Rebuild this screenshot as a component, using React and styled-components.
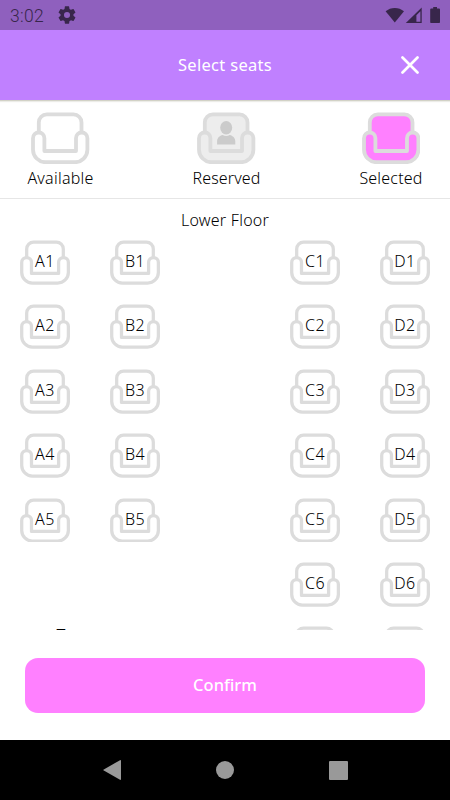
import React from "react";
import styled, { createGlobalStyle } from "styled-components";

const GlobalStyle = createGlobalStyle`
  * {
    box-sizing: border-box;
  }
  body {
    margin: 0;
    background: #fff;
    font-family: "Noto Sans", "Open Sans", sans-serif;
  }
`;

const Screen = styled.div`
  width: 450px;
  height: 800px;
  display: flex;
  flex-direction: column;
  overflow: hidden;
  background: #fff;
  color: #000;
`;

const StatusBar = styled.div`
  height: 30px;
  flex: none;
  display: flex;
  align-items: center;
  padding: 0 9px 0 10px;
  background: #8f60be;
  color: #38264b;
`;

const Clock = styled.span`
  font-family: Roboto, sans-serif;
  font-size: 17.5px;
  font-weight: 300;
  letter-spacing: 0.3px;
  line-height: 30px;
  padding-top: 1px;
  width: 48px;
`;

const StatusIcons = styled.div`
  display: flex;
  align-items: center;
  margin-left: auto;
`;

const Header = styled.header`
  height: 71px;
  flex: none;
  display: grid;
  grid-template-columns: 80px 1fr 80px;
  align-items: center;
  justify-items: center;
  background: #c080ff;
  border-bottom: 1px solid #d2d2c6;
  box-shadow: 0 1px 1px #ecece8;
`;

const Title = styled.h1`
  grid-column: 2;
  margin: 0;
  padding-bottom: 1px;
  font-size: 16.5px;
  font-weight: 400;
  letter-spacing: 0.3px;
  color: #fff;
`;

const CloseButton = styled.button`
  border: 0;
  padding: 0;
  background: none;
  display: flex;
`;

const Legend = styled.div`
  height: 98px;
  flex: none;
  display: flex;
  justify-content: space-between;
  padding: 11px 27px 0;
  border-bottom: 1px solid #e6e6e6;
`;

const LegendItem = styled.div`
  width: ${(p) => p.$width}px;
  display: flex;
  flex-direction: column;
  align-items: center;
`;

const Label = styled.span`
  font-size: 16px;
  font-weight: 300;
  line-height: 22px;
  margin-top: 3px;
  white-space: nowrap;
  letter-spacing: ${(p) => p.$spacing || 0}px;
`;

const SeatArea = styled.main`
  height: 431px;
  flex: none;
  overflow: hidden;
`;

const Floor = styled.h2`
  margin: 0;
  height: 41px;
  padding-top: 9px;
  text-align: center;
  font-size: 16px;
  line-height: 24px;
  font-weight: 300;
  letter-spacing: 0.25px;
`;

const SeatGrid = styled.div`
  display: grid;
  grid-template-columns: repeat(5, 90px);
  grid-auto-rows: 64.4px;
  justify-items: center;
`;

const SeatCell = styled.div`
  grid-column: ${(p) => p.$col};
  grid-row: ${(p) => p.$row};
  display: grid;
  justify-items: center;
  align-items: start;

  > * {
    grid-area: 1 / 1;
  }
`;

const SeatName = styled.span`
  font-size: 16px;
  font-weight: 300;
  line-height: 22px;
  padding-top: 10px;
  letter-spacing: 0.5px;
`;

const DoorMark = styled.span`
  grid-column: 1;
  grid-row: 7;
  font-size: 16px;
  line-height: 22px;
  padding-left: 32px;
  margin-top: -2px;
`;

const Footer = styled.footer`
  flex: 1;
  padding: 27.5px 25px 0;
`;

const ConfirmButton = styled.button`
  display: block;
  width: 400px;
  height: 55px;
  padding-bottom: 2px;
  border: 0;
  border-radius: 13px;
  background: #ff80ff;
  color: #fff;
  font-family: inherit;
  font-size: 16.5px;
  font-weight: 500;
`;

const NavBar = styled.nav`
  height: 60px;
  flex: none;
  display: grid;
  grid-template-columns: repeat(3, 113px);
  justify-content: center;
  justify-items: center;
  align-items: center;
  background: #000;
`;

const Seat = ({ width, fill = "none", person }) => (
  <svg width={width} height={(width * 52.2) / 58.3} viewBox="0 0 58.3 52.2">
    <g fill={fill} stroke="#dcdcdc" strokeWidth="3.8" strokeLinejoin="round">
      <path
        stroke="none"
        d="M7.8 21V10.4a8 8 0 0 1 8-8h26.7a8 8 0 0 1 8 8v10.6l-5 18h-32z"
      />
      <path
        fill="none"
        d="M7.8 20V10.4a8 8 0 0 1 8-8h26.7a8 8 0 0 1 8 8v9.6"
      />
      <path d="M2 26.2a5.7 5.7 0 0 1 11.4 0v12.8H45V26.2a5.7 5.7 0 0 1 11.4 0v11.6a12.5 12.5 0 0 1-12.5 12.4H14.4A12.5 12.5 0 0 1 2 37.8z" />
    </g>
    {person && (
      <g fill="#cbcbcb">
        <ellipse cx="29.2" cy="15.8" rx="6" ry="6.7" />
        <path d="M20.1 32.5v-3.2c0-3.4 2.6-5.4 5.6-6.2 2.2 1.2 4.8 1.2 7 0 3 .8 5.6 2.8 5.6 6.2v3.2z" />
      </g>
    )}
  </svg>
);

const COLUMNS = [
  { letter: "A", col: 1, count: 5 },
  { letter: "B", col: 2, count: 5 },
  { letter: "C", col: 4, count: 7 },
  { letter: "D", col: 5, count: 7 },
];

const App = () => {
  return (
    <Screen>
      <GlobalStyle />
      <StatusBar>
        <Clock>3:02</Clock>
        <svg width="18" height="18" viewBox="1.6 1.6 20.8 20.8" fill="#38264b">
          <path d="M19.43 12.98c.04-.32.07-.64.07-.98s-.03-.66-.07-.98l2.11-1.65c.19-.15.24-.42.12-.64l-2-3.46c-.12-.22-.39-.3-.61-.22l-2.49 1c-.52-.4-1.08-.73-1.69-.98l-.38-2.65A.49.49 0 0 0 14 2h-4c-.25 0-.46.18-.49.42l-.38 2.65c-.61.25-1.17.59-1.69.98l-2.49-1c-.23-.09-.49 0-.61.22l-2 3.46c-.13.22-.07.49.12.64l2.11 1.65c-.04.32-.07.65-.07.98s.03.66.07.98l-2.11 1.65c-.19.15-.24.42-.12.64l2 3.46c.12.22.39.3.61.22l2.49-1c.52.4 1.08.73 1.69.98l.38 2.65c.03.24.24.42.49.42h4c.25 0 .46-.18.49-.42l.38-2.65c.61-.25 1.17-.59 1.69-.98l2.49 1c.23.09.49 0 .61-.22l2-3.46c.12-.22.07-.49-.12-.64zM12 15.5a3.5 3.5 0 1 1 0-7 3.5 3.5 0 0 1 0 7z" />
        </svg>
        <StatusIcons>
          <svg width="56" height="18" viewBox="0 0 56 18" fill="#38264b">
            <path d="M0.6 5.3a14.2 14.2 0 0 1 18.4 0L9.8 16.6z" />
            <path
              fillRule="evenodd"
              d="M36.7 1.6v15.4H20.8zM35.4 5.2l-4 4v6.5h4z"
            />
            <path d="M48.2 1h3.8v1.5h2.1c.6 0 .9.4.9.9v12.5c0 .6-.4 1.1-1 1.1h-7.8c-.6 0-1-.5-1-1.1V3.4c0-.5.4-.9.9-.9h2.1z" />
          </svg>
        </StatusIcons>
      </StatusBar>
      <Header>
        <Title>Select seats</Title>
        <CloseButton aria-label="Close">
          <svg
            width="18"
            height="18"
            viewBox="0 0 18 18"
            stroke="#fff"
            strokeWidth="2.7"
            strokeLinecap="round"
          >
            <path d="M1.5 1.5l15 15M16.5 1.5l-15 15" />
          </svg>
        </CloseButton>
      </Header>
      <Legend>
        <LegendItem $width={67}>
          <Seat width={58.3} />
          <Label $spacing={0.25}>Available</Label>
        </LegendItem>
        <LegendItem $width={66}>
          <Seat width={58.3} fill="#ededed" person />
          <Label $spacing={0.1}>Reserved</Label>
        </LegendItem>
        <LegendItem $width={64}>
          <Seat width={58.3} fill="#ff80ff" />
          <Label $spacing={0.2}>Selected</Label>
        </LegendItem>
      </Legend>
      <SeatArea>
        <Floor>Lower Floor</Floor>
        <SeatGrid>
          {COLUMNS.map(({ letter, col, count }) =>
            Array.from({ length: count }, (_, i) => (
              <SeatCell key={letter + i} $col={col} $row={i + 1}>
                <Seat width={50} />
                {i < 6 && <SeatName>{letter + (i + 1)}</SeatName>}
              </SeatCell>
            ))
          )}
          <DoorMark>T</DoorMark>
        </SeatGrid>
      </SeatArea>
      <Footer>
        <ConfirmButton>Confirm</ConfirmButton>
      </Footer>
      <NavBar>
        <svg width="18" height="20" viewBox="0 0 18 20" fill="#999">
          <path d="M17 .2c.6-.3 1 0 1 .6v18.4c0 .6-.4.9-1 .6L.8 10.6c-.7-.4-.7-.8 0-1.2z" />
        </svg>
        <svg width="18" height="18" viewBox="0 0 18 18" fill="#999">
          <circle cx="9" cy="9" r="9" />
        </svg>
        <svg width="19" height="19" viewBox="0 0 19 19" fill="#999">
          <rect width="19" height="19" rx="1" />
        </svg>
      </NavBar>
    </Screen>
  );
};

export default App;
